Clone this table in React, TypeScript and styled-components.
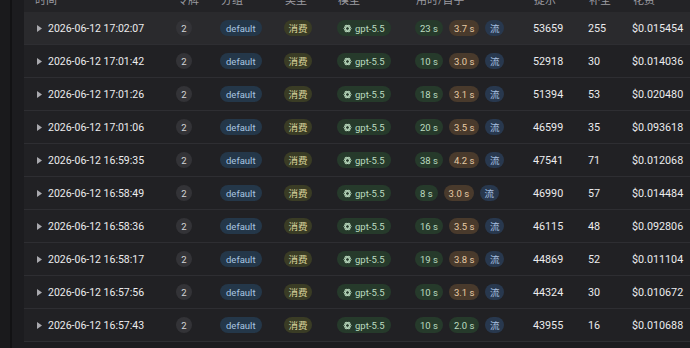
import { createGlobalStyle } from "styled-components";
import styled from "styled-components";

const GlobalStyle = createGlobalStyle`
  html, body {
    margin: 0;
    padding: 0;
    background: #1c1c1f;
    overflow: hidden;
  }
  body {
    font-family: Roboto, "Noto Sans CJK SC", sans-serif;
    color: #ececee;
  }
`;

const Page = styled.div`
  display: flex;
  width: 100vw;
  height: 100vh;
  overflow: hidden;
`;

const Sidebar = styled.div`
  width: 10px;
  flex-shrink: 0;
  background: #1a1a1c;
  border-right: 2px solid #121214;
`;

const Main = styled.div`
  flex: 1;
  min-width: 0;
  padding-left: 12px;
  background: #1c1c1f;
  overflow: hidden;
`;

const Table = styled.div`
  margin-top: -14px;
  width: 720px;
`;

const cols = "152px 44px 64px 53px 78px 118px 55px 44px 1fr";

const HeadRow = styled.div`
  display: grid;
  grid-template-columns: ${cols};
  align-items: center;
  height: 26px;
  background: #232326;
  color: #9c9ca2;
  font-size: 11px;
`;

const HeadCell = styled.div<{ $first?: boolean }>`
  padding-left: ${({ $first }) => ($first ? "11px" : "1px")};
`;

const Row = styled.div<{ $hover?: boolean }>`
  display: grid;
  grid-template-columns: ${cols};
  align-items: center;
  height: 32px;
  border-bottom: 1px solid #2e2e32;
  background: ${({ $hover }) => ($hover ? "#2a2a2d" : "#212124")};
  font-size: 10.75px;
`;

const DateCell = styled.div`
  display: flex;
  align-items: center;
  gap: 6px;
  padding-left: 13px;
  color: #ececee;
  font-size: 10.5px;
`;

const Cell = styled.div`
  display: flex;
  align-items: center;
  gap: 6px;
`;

const Circle = styled.span`
  display: inline-flex;
  align-items: center;
  justify-content: center;
  width: 16px;
  height: 16px;
  border-radius: 50%;
  background: #333337;
  color: #d4d4d8;
  font-size: 9.5px;
`;

const tones = {
  blue: { bg: "#243749", fg: "#a8c6e0" },
  olive: { bg: "#3a3c25", fg: "#dcd69e" },
  green: { bg: "#263a2b", fg: "#bcdcc0" },
  brown: { bg: "#493a2c", fg: "#e6caa6" },
  stream: { bg: "#28384e", fg: "#a9c1e2" },
};

type Tone = keyof typeof tones;

const Pill = styled.span<{ $tone: Tone; $pad?: number }>`
  display: inline-flex;
  align-items: center;
  gap: 3px;
  height: 16px;
  padding: 0 ${({ $pad }) => $pad ?? 6}px;
  border-radius: 8px;
  background: ${({ $tone }) => tones[$tone].bg};
  color: ${({ $tone }) => tones[$tone].fg};
  font-size: 9.5px;
  white-space: nowrap;
`;

const Num = styled.div`
  color: #ececee;
`;

const Arrow = () => (
  <svg width="5" height="7" viewBox="0 0 5 7">
    <path d="M0 0 L5 3.5 L0 7 Z" fill="#a9a9ae" />
  </svg>
);

const ModelIcon = () => (
  <svg width="9" height="9" viewBox="0 0 20 20" fill="none" stroke="#bcdcc0" strokeWidth="2">
    <ellipse cx="10" cy="10" rx="8" ry="4" />
    <ellipse cx="10" cy="10" rx="8" ry="4" transform="rotate(60 10 10)" />
    <ellipse cx="10" cy="10" rx="8" ry="4" transform="rotate(120 10 10)" />
  </svg>
);

const rows = [
  ["2026-06-12 17:02:07", "23 s", "3.7 s", "53659", "255", "$0.015454"],
  ["2026-06-12 17:01:42", "10 s", "3.0 s", "52918", "30", "$0.014036"],
  ["2026-06-12 17:01:26", "18 s", "3.1 s", "51394", "53", "$0.020480"],
  ["2026-06-12 17:01:06", "20 s", "3.5 s", "46599", "35", "$0.093618"],
  ["2026-06-12 16:59:35", "38 s", "4.2 s", "47541", "71", "$0.012068"],
  ["2026-06-12 16:58:49", "8 s", "3.0 s", "46990", "57", "$0.014484"],
  ["2026-06-12 16:58:36", "16 s", "3.5 s", "46115", "48", "$0.092806"],
  ["2026-06-12 16:58:17", "19 s", "3.8 s", "44869", "52", "$0.011104"],
  ["2026-06-12 16:57:56", "10 s", "3.1 s", "44324", "30", "$0.010672"],
  ["2026-06-12 16:57:43", "10 s", "2.0 s", "43955", "16", "$0.010688"],
];

const headers = ["时间", "令牌", "分组", "类型", "模型", "用时/首字", "提示", "补全", "花费"];

export default function App() {
  return (
    <Page>
      <GlobalStyle />
      <Sidebar />
      <Main>
        <Table>
          <HeadRow>
            {headers.map((h, i) => (
              <HeadCell key={h} $first={i === 0}>
                {h}
              </HeadCell>
            ))}
          </HeadRow>
          {rows.map(([time, use, first, prompt, completion, cost], i) => (
            <Row key={time} $hover={i === 0}>
              <DateCell>
                <Arrow />
                {time}
              </DateCell>
              <Cell>
                <Circle>2</Circle>
              </Cell>
              <Cell>
                <Pill $tone="blue">default</Pill>
              </Cell>
              <Cell>
                <Pill $tone="olive" $pad={4.5}>消费</Pill>
              </Cell>
              <Cell>
                <Pill $tone="green">
                  <ModelIcon />
                  gpt-5.5
                </Pill>
              </Cell>
              <Cell>
                <Pill $tone="green" $pad={5}>{use}</Pill>
                <Pill $tone={parseFloat(first) < 3 ? "green" : "brown"} $pad={5}>
                  {first}
                </Pill>
                <Pill $tone="stream" $pad={4.5}>流</Pill>
              </Cell>
              <Num>{prompt}</Num>
              <Num>{completion}</Num>
              <Num>{cost}</Num>
            </Row>
          ))}
        </Table>
      </Main>
    </Page>
  );
}
